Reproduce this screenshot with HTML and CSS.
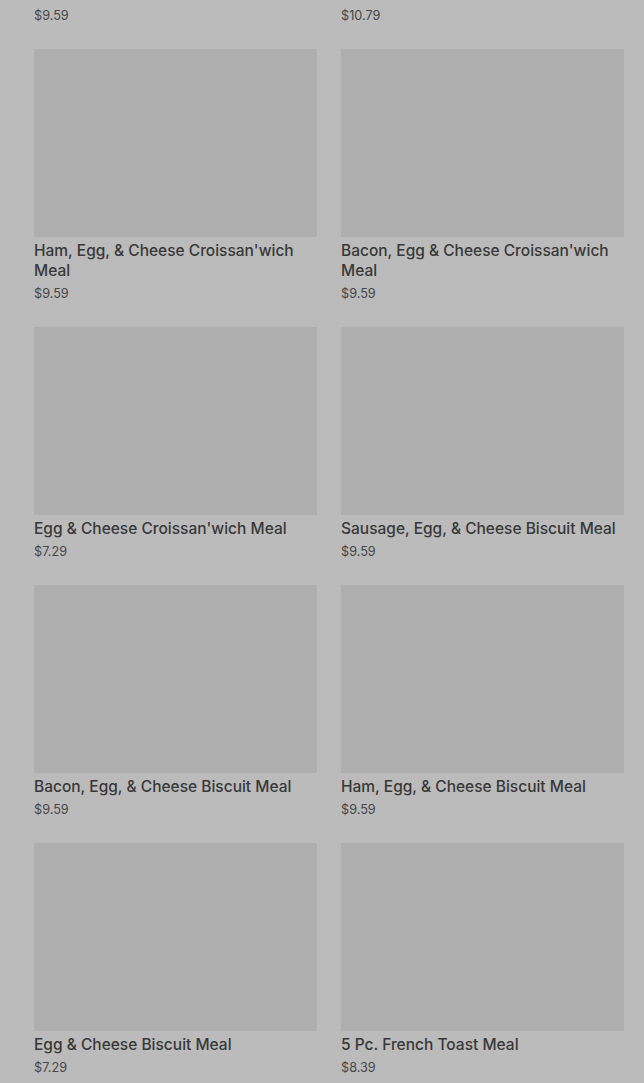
FILE: index.html
```html
<!DOCTYPE html>
<html>
<head>
<meta charset="utf-8">
<link rel="stylesheet" href="styles.css">
</head>
<body>
<div class="grid">
  <div class="card partial"><div class="price">$9.59</div></div>
  <div class="card partial"><div class="price">$10.79</div></div>

  <div class="card"><div class="img"></div><div class="title">Ham, Egg, &amp; Cheese Croissan'wich Meal</div><div class="price">$9.59</div></div>
  <div class="card"><div class="img"></div><div class="title">Bacon, Egg &amp; Cheese Croissan'wich Meal</div><div class="price">$9.59</div></div>

  <div class="card"><div class="img"></div><div class="title">Egg &amp; Cheese Croissan'wich Meal</div><div class="price">$7.29</div></div>
  <div class="card"><div class="img"></div><div class="title">Sausage, Egg, &amp; Cheese Biscuit Meal</div><div class="price">$9.59</div></div>

  <div class="card"><div class="img"></div><div class="title">Bacon, Egg, &amp; Cheese Biscuit Meal</div><div class="price">$9.59</div></div>
  <div class="card"><div class="img"></div><div class="title">Ham, Egg, &amp; Cheese Biscuit Meal</div><div class="price">$9.59</div></div>

  <div class="card"><div class="img"></div><div class="title">Egg &amp; Cheese Biscuit Meal</div><div class="price">$7.29</div></div>
  <div class="card"><div class="img"></div><div class="title">5 Pc. French Toast Meal</div><div class="price">$8.39</div></div>
</div>
</body>
</html>
```

FILE: styles.css
```css
html, body {
  margin: 0;
  padding: 0;
  background: #bbbbbb;
  font-family: Inter, Roboto, "Liberation Sans", sans-serif;
}
.grid {
  display: grid;
  grid-template-columns: 283px 283px;
  column-gap: 24px;
  row-gap: 24px;
  padding: 7px 20px 0 34px;
}
.card {
  display: flex;
  flex-direction: column;
}
.img {
  height: 188px;
  background: #afafaf;
}
.title {
  margin-top: 4px;
  font-size: 15.5px;
  line-height: 20px;
  font-weight: 500;
  color: #383838;
}
.price {
  margin-top: 4px;
  font-size: 12.7px;
  line-height: 18px;
  color: #474747;
}
.partial .price {
  margin-top: 0;
}
```
